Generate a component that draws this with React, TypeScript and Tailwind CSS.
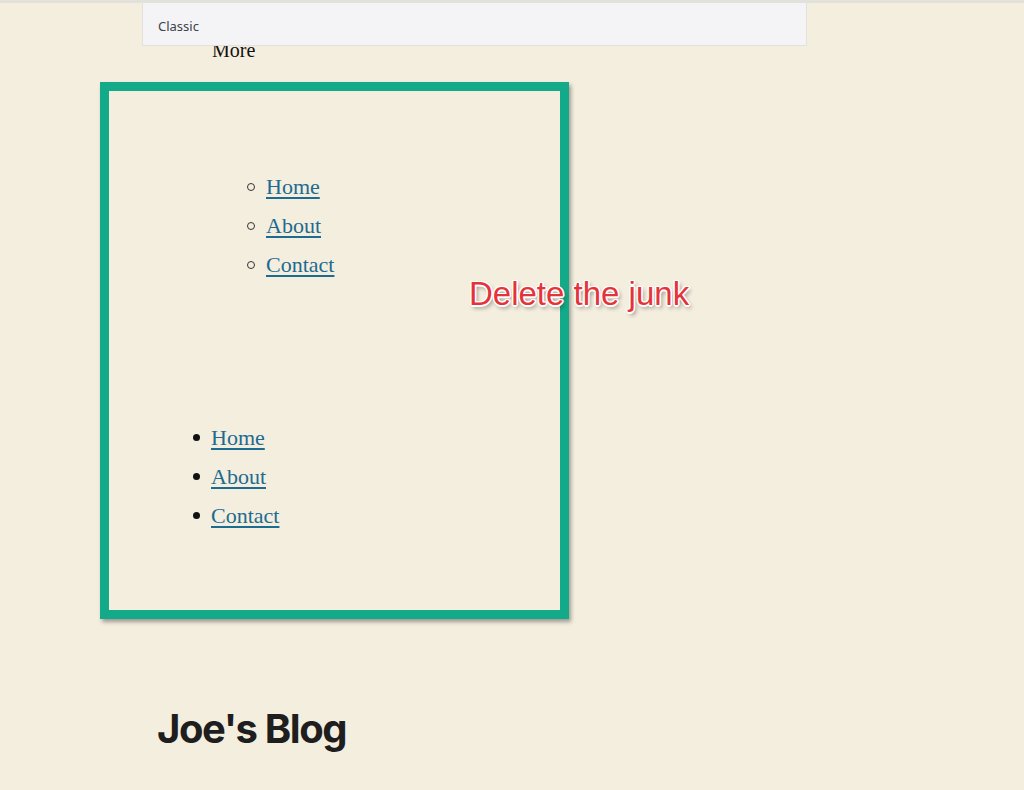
import React from 'react';

const serif = "font-['Liberation_Serif','Times_New_Roman',serif]";

function NavList({ kind }: { kind: 'circle' | 'disc' }) {
  const items = ['Home', 'About', 'Contact'];
  return (
    <ul className={kind === 'circle' ? 'ml-[138px]' : 'ml-[83px]'}>
      {items.map((label) => (
        <li key={label} className="flex h-[39px] items-center">
          {kind === 'circle' ? (
            <span className="mr-[11px] h-[8px] w-[8px] rounded-full border-[1.5px] border-[#333]" />
          ) : (
            <span className="mr-[11px] ml-[1px] h-[7px] w-[7px] rounded-full bg-[#111]" />
          )}
          <a
            href="#"
            className={`${serif} text-[22px] leading-none text-[#1d6b90] underline decoration-[2px] underline-offset-[3px]`}
          >
            {label}
          </a>
        </li>
      ))}
    </ul>
  );
}

export default function App() {
  return (
    <div className="relative min-h-[790px] w-[1024px] overflow-hidden bg-[#f4eedf]">
      {/* editor chrome */}
      <div className="h-[3px] bg-[#e3e1dc]" />
      <div className="relative z-10 ml-[142px] flex h-[43px] w-[665px] items-center border border-t-0 border-[#e2e1df] bg-[#f4f4f6] px-[15px] pt-[5px]">
        <span className="font-['Noto_Sans','Liberation_Sans',sans-serif] text-[13px] text-[#3c434a]">Classic</span>
      </div>
      <div className={`${serif} -mt-[8px] ml-[212px] text-[20px] leading-[24px] text-[#111]`}>More</div>

      {/* highlighted menu block */}
      <div className="ml-[100px] mt-[20px] h-[537px] w-[469px] border-[9px] border-[#12aa89] pt-[76px] shadow-[2px_3px_4px_rgba(0,0,0,0.35)]">
        <NavList kind="circle" />
        <div className="h-[134px]" />
        <NavList kind="disc" />
      </div>

      <h1 className="ml-[157px] mt-[90px] font-['Inter','Liberation_Sans',sans-serif] text-[40px] font-bold leading-none tracking-[-0.035em] text-[#1e1e1e]">
        Joe's Blog
      </h1>

      {/* annotation */}
      <div className="absolute left-[469px] top-[275px] font-['Liberation_Sans',Arial,sans-serif] text-[33px] leading-[38px] text-[#e5333a] [text-shadow:1.5px_0_0_#fff,-1.5px_0_0_#fff,0_1.5px_0_#fff,0_-1.5px_0_#fff,1px_1px_0_#fff,-1px_-1px_0_#fff,1px_-1px_0_#fff,-1px_1px_0_#fff,2px_3px_4px_rgba(0,0,0,0.45)]">
        Delete the junk
      </div>
    </div>
  );
}
